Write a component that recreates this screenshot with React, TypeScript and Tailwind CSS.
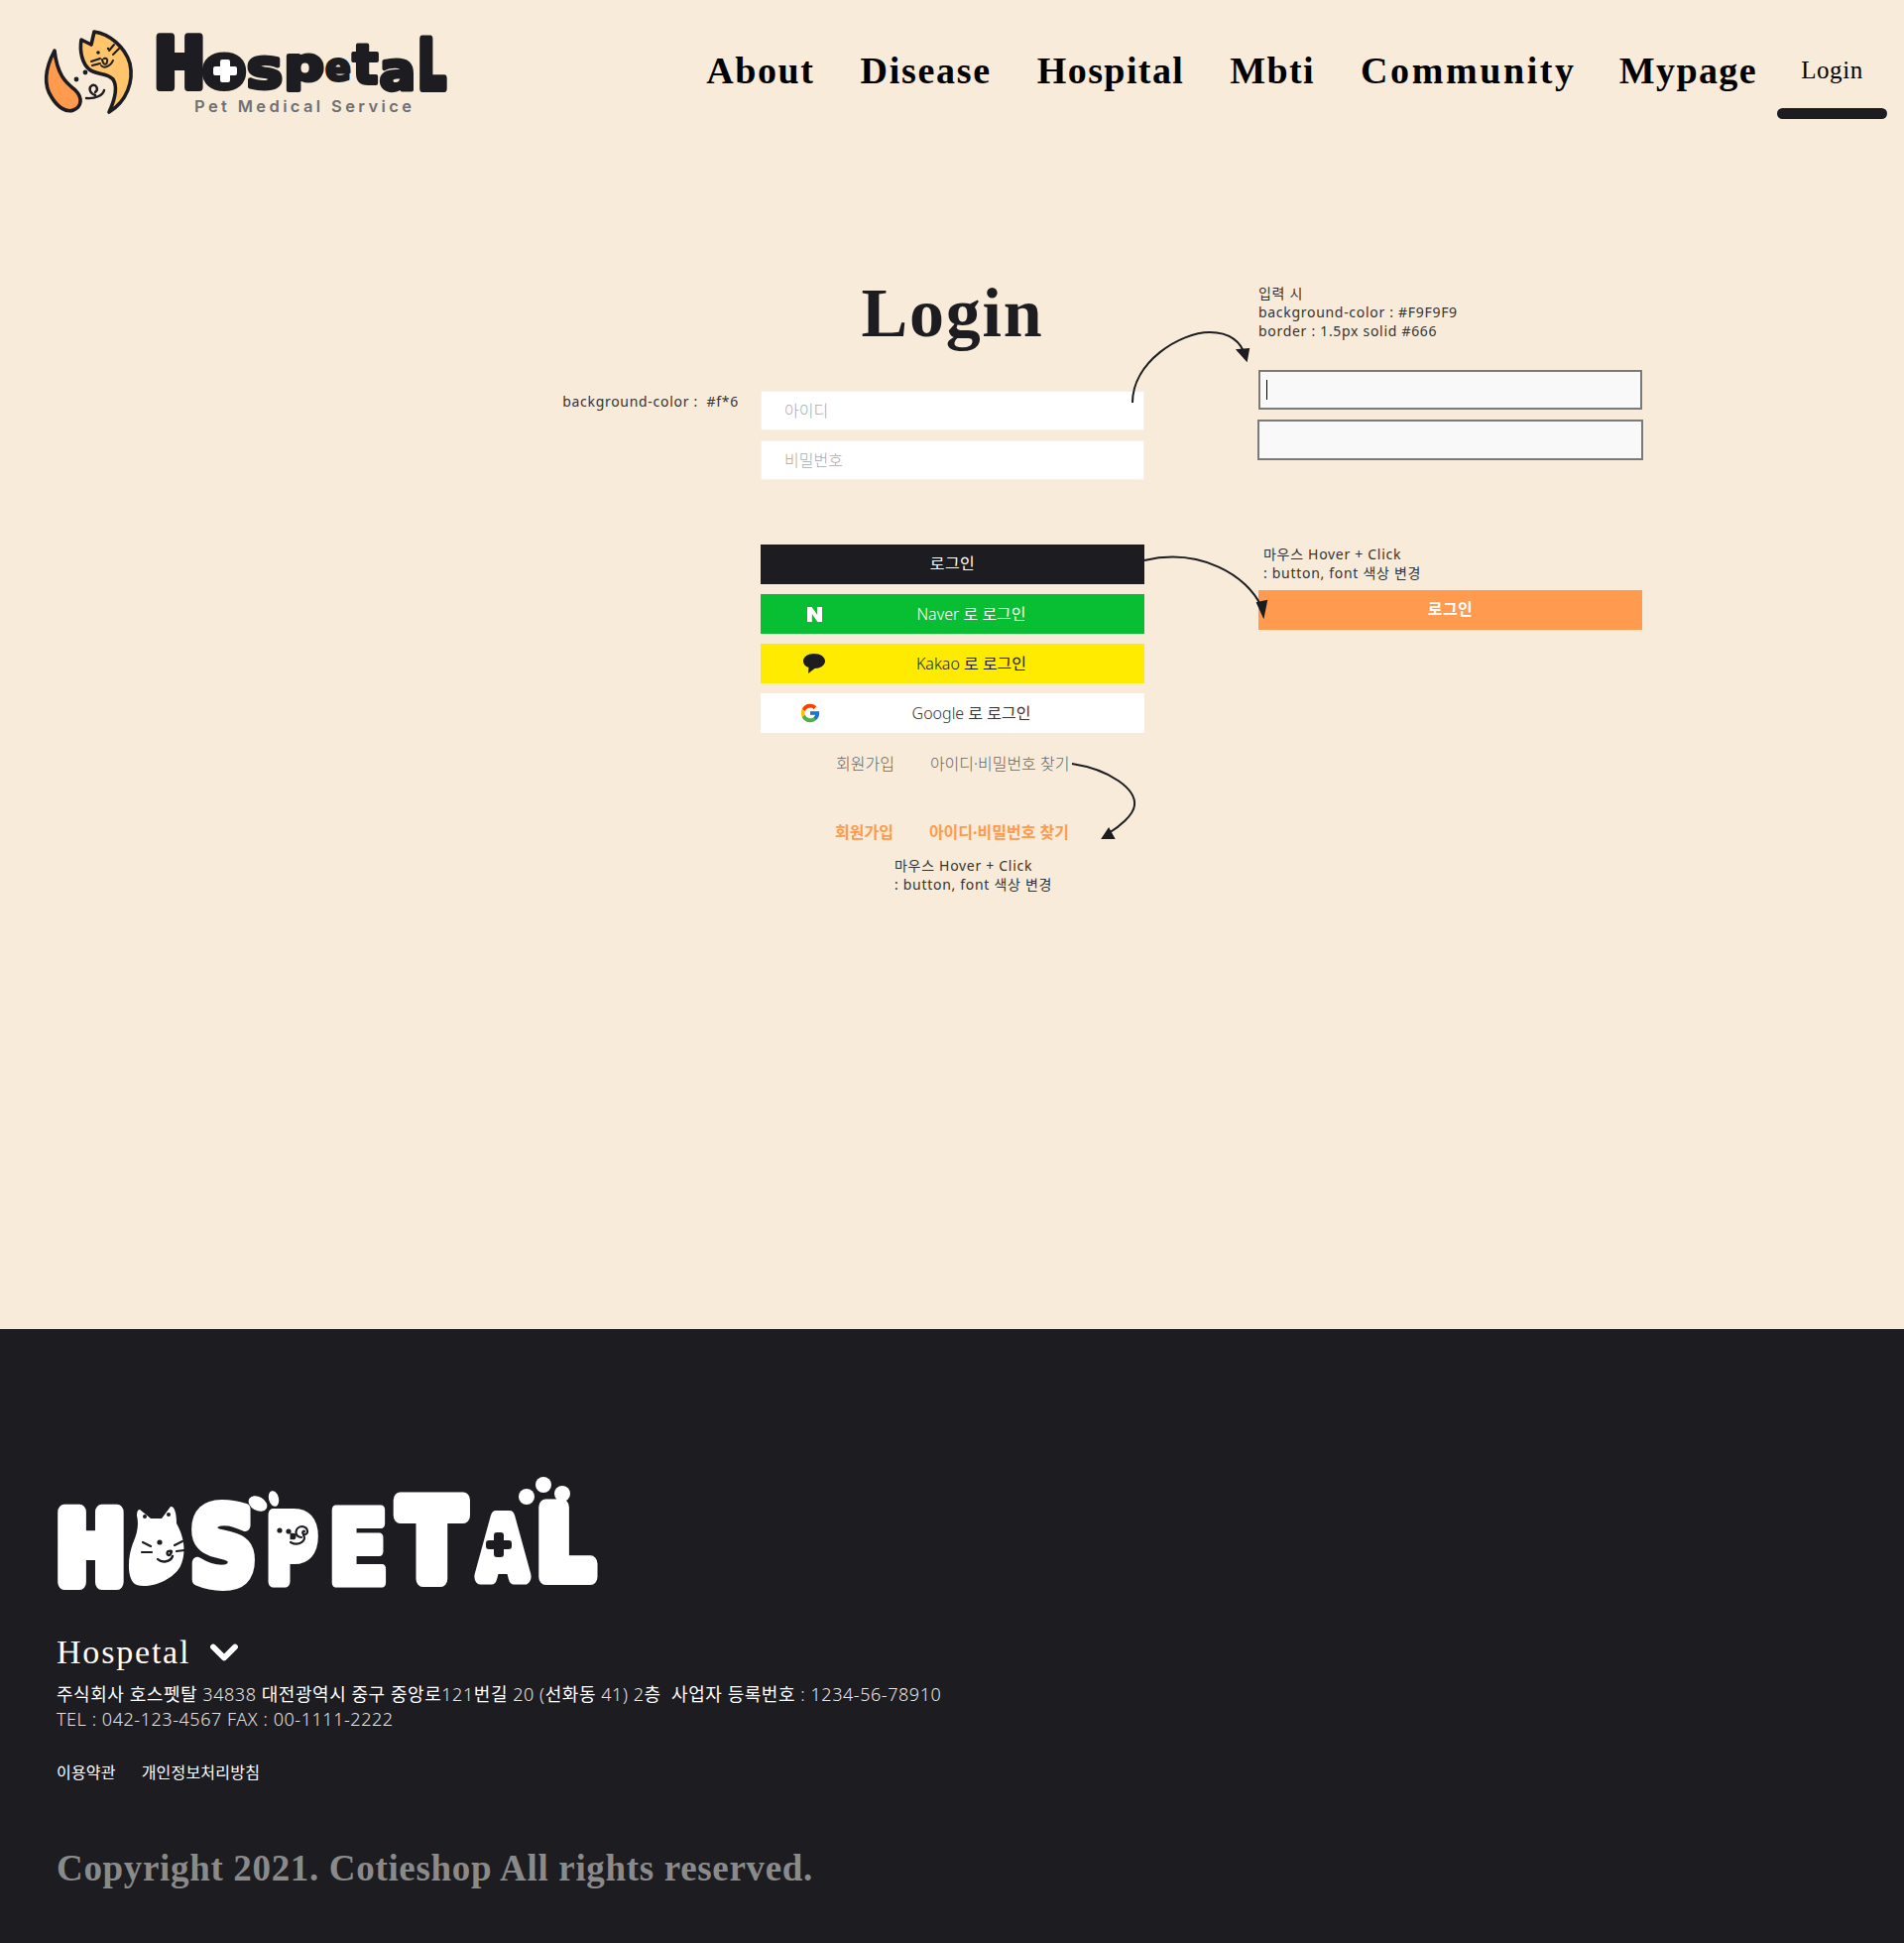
import { ChevronDown } from "lucide-react";
import { SiNaver } from "react-icons/si";
import { FcGoogle } from "react-icons/fc";

const navItems = [
  { label: "About", cls: "tracking-[1.6px]" },
  { label: "Disease", cls: "tracking-[1.7px]" },
  { label: "Hospital", cls: "tracking-[1.4px]" },
  { label: "Mbti", cls: "tracking-[1.4px]" },
  { label: "Community", cls: "mr-[-3px] tracking-[2.6px]" },
  { label: "Mypage", cls: "tracking-[1.4px]" },
];

// 글자별 여백 보정 (DejaVu Sans Bold 기준)
const bearing: Record<string, number> = { H: 1.28, o: 1.14, s: 1.15, p: 1.15, e: 1.12, t: 1.12, a: 1.15, L: 1.2, S: 1.15, P: 1.2, E: 1.2, T: 1.02, A: 1.0 };

// 로고 글자 하나 (실제 텍스트에 둥근 외곽선)
function LogoLetter({ ch, x, w, y, size, color, sw }: { ch: string; x: number; w: number; y: number; size: number; color: string; sw: number }) {
  const ink = w - sw;
  const len = ink * (bearing[ch] ?? 1.1);
  return (
    <text
      x={x + sw / 2 - (len - ink) / 2}
      y={y}
      fontFamily="'DejaVu Sans', sans-serif"
      fontWeight={700}
      fontSize={size}
      fill={color}
      stroke={color}
      strokeWidth={sw}
      strokeLinejoin="round"
      textLength={len}
      lengthAdjust="spacingAndGlyphs"
    >
      {ch}
    </text>
  );
}

function CatMark() {
  return (
    <svg viewBox="0 0 130 110" className="h-[110px] w-[130px] shrink-0">
      <path d="M25 31 C15 50 14 66 22 78 C28 88 37 94 44 91 C52 88 54 79 46 71 C38 64 28 58 25 31 Z" fill="#ff9a4e" stroke="#1c1c21" strokeWidth="3.6" strokeLinejoin="round" />
      <path d="M52 20 L62 25 L65 12 C80 14 96 27 101 44 C105 62 98 82 80 93 C86 80 89 68 84 60 C78 53 68 56 60 50 C53 44 50 32 52 20 Z" fill="#ffc46c" stroke="#1c1c21" strokeWidth="3.6" strokeLinejoin="round" />
      <circle cx="47" cy="60" r="2.4" fill="#1c1c21" />
      <circle cx="56" cy="53" r="2.4" fill="#1c1c21" />
      <path d="M57 79 C66 80 74 76 75 71 M66 76 C60 74 59 68 63 66 C67 65 70 70 66 73" fill="none" stroke="#1c1c21" strokeWidth="2.4" strokeLinecap="round" />
      <path d="M62 42 L71 39 M63 46 L71 44 M80 31 L85 25 M84 35 L90 29" stroke="#1c1c21" strokeWidth="2" strokeLinecap="round" />
      <circle cx="69" cy="33" r="1.8" fill="#1c1c21" />
      <circle cx="79" cy="29" r="1.2" fill="#1c1c21" />
      <path d="M73 40 C74 46 78 46 78 42 C79 40 77 38 75 39 M72 46 C75 50 82 46 84 41" fill="none" stroke="#1c1c21" strokeWidth="2" strokeLinecap="round" />
    </svg>
  );
}

function HeaderWordmark() {
  const c = "#1c1c21";
  return (
    <svg viewBox="150 25 310 95" className="mt-[5px] ml-[-10px] h-[95px] w-[310px] shrink-0">
      <LogoLetter ch="H" x={157} w={48} y={88} size={70} color={c} sw={8} />
      <LogoLetter ch="o" x={204} w={44} y={87} size={56} color={c} sw={8} />
      <path d="M224 60 h6 a2 2 0 0 1 2 2 v5 h5 a2 2 0 0 1 2 2 v5 a2 2 0 0 1 -2 2 h-5 v5 a2 2 0 0 1 -2 2 h-6 a2 2 0 0 1 -2 -2 v-5 h-5 a2 2 0 0 1 -2 -2 v-5 a2 2 0 0 1 2 -2 h5 v-5 a2 2 0 0 1 2 -2 Z" fill="#fff" />
      <LogoLetter ch="s" x={249} w={36} y={88} size={56} color={c} sw={4} />
      <LogoLetter ch="p" x={287} w={39} y={81} size={47} color={c} sw={4} />
      <LogoLetter ch="e" x={328} w={26} y={81} size={38} color={c} sw={3} />
      <LogoLetter ch="t" x={355} w={27} y={84} size={56} color={c} sw={4} />
      <LogoLetter ch="a" x={383} w={36} y={90} size={54} color={c} sw={4} />
      <LogoLetter ch="L" x={420} w={31} y={89} size={68} color={c} sw={8} />
      <text x={196} y={113} fontFamily="Inter, sans-serif" fontWeight={600} fontSize={16.5} fill="#6f7073" textLength={219}>
        Pet Medical Service
      </text>
    </svg>
  );
}

function FooterLogo() {
  const w = "#ffffff";
  const d = "#1c1c21";
  return (
    <svg viewBox="50 1490 560 125" className="h-[125px] w-[560px]">
      <LogoLetter ch="H" x={57} w={69} y={1597} size={97} color={w} sw={16} />
      {/* 고양이 O */}
      <path d="M141 1524 L152 1533 L163 1533 L172 1521 C176 1520 178 1528 178 1538 C186 1552 188 1568 182 1581 C174 1596 150 1604 138 1600 C128 1596 128 1574 134 1558 C139 1547 140 1538 138 1530 C138 1526 139 1524 141 1524 Z" fill={w} />
      <circle cx="146" cy="1531" r="2" fill={d} />
      <circle cx="170" cy="1529" r="2" fill={d} />
      <circle cx="161" cy="1557" r="2.6" fill={d} />
      <path d="M144 1557 L152 1561 M143 1567 L153 1567 M184 1556 L176 1560 M186 1565 L178 1566" stroke={d} strokeWidth="2.2" strokeLinecap="round" />
      <path d="M171 1566 C175 1564 172 1570 170 1570 C168 1570 168 1565 171 1566 M159 1574 C163 1578 172 1577 174 1571" fill="none" stroke={d} strokeWidth="2.4" strokeLinecap="round" />
      <LogoLetter ch="S" x={190} w={70} y={1599} size={106} color={w} sw={12} />
      <LogoLetter ch="P" x={267} w={54} y={1596} size={92} color={w} sw={12} />
      <circle cx="291" cy="1546" r="2.6" fill={d} />
      <circle cx="282" cy="1545" r="2.6" fill={d} />
      <path d="M293 1557 C302 1562 310 1554 306 1550 M304 1552 C296 1552 297 1541 305 1541 C311 1542 312 1550 306 1549 C304 1547 306 1545 307 1546" fill="none" stroke={d} strokeWidth="2.2" strokeLinecap="round" />
      <ellipse cx="260" cy="1518" rx="10" ry="7" fill={w} transform="rotate(30 260 1518)" />
      <ellipse cx="276" cy="1513" rx="5" ry="8" fill={w} transform="rotate(-15 276 1513)" />
      <LogoLetter ch="E" x={331} w={60} y={1598} size={102} color={w} sw={9} />
      <LogoLetter ch="T" x={396} w={79} y={1594} size={108} color={w} sw={16} />
      <LogoLetter ch="A" x={476} w={62} y={1592} size={81} color={w} sw={16} />
      <path d="M501 1547 h4 a3 3 0 0 1 3 3 v5 h5 a3 3 0 0 1 3 3 v3 a3 3 0 0 1 -3 3 h-5 v5 a3 3 0 0 1 -3 3 h-4 a3 3 0 0 1 -3 -3 v-5 h-5 a3 3 0 0 1 -3 -3 v-3 a3 3 0 0 1 3 -3 h5 v-5 a3 3 0 0 1 3 -3 Z" fill={d} />
      <LogoLetter ch="L" x={539} w={62} y={1592} size={97} color={w} sw={16} />
      <circle cx="531" cy="1511" r="8" fill={w} />
      <circle cx="548" cy="1499" r="8" fill={w} />
      <circle cx="567" cy="1508" r="8" fill={w} />
    </svg>
  );
}

function KakaoIcon() {
  return (
    <svg viewBox="0 0 22 20" className="h-5 w-[22px]">
      <path d="M11 0 C17 0 22 3 22 7.5 C22 12 17 15 11.5 15 L5 20 L5.5 14 C2 12.8 0 10.4 0 7.5 C0 3 5 0 11 0 Z" fill="#1c1c21" />
    </svg>
  );
}

function SocialButton({ icon, brand, className }: { icon: React.ReactNode; brand: string; className: string }) {
  return (
    <button className={`flex h-10 w-full items-center pl-[38px] pr-[32px] text-base font-light ${className}`}>
      <span className="flex w-8 shrink-0 items-center justify-center">{icon}</span>
      <span className="flex-1 text-center">
        {brand} <span className="font-normal">로 로그인</span>
      </span>
    </button>
  );
}

export default function App() {
  return (
    <div className="flex min-h-[1959px] flex-col bg-[#f8ebd9] font-['Noto_Sans','Noto_Sans_CJK_KR',sans-serif] text-[#1c1c21]">
      {/* 헤더 */}
      <header className="flex h-[140px] shrink-0 items-start justify-between pr-[17px] pl-[30px] pt-5">
        <div className="flex items-start">
          <CatMark />
          <HeaderWordmark />
        </div>
        <nav className="mt-[-20px] flex items-start pt-[46px] font-['Liberation_Serif',serif]">
          {navItems.map((item) => (
            <a key={item.label} className={`px-[23px] text-[38px] leading-[50px] font-bold text-black ${item.cls}`}>
              {item.label}
            </a>
          ))}
          <a className="ml-[-3px] flex h-[74px] w-[111px] flex-col items-center justify-between">
            <span className="text-[25px] leading-[50px] tracking-[0.6px] text-black">Login</span>
            <span className="h-[11px] w-full rounded-full bg-[#1c1c21]" />
          </a>
        </nav>
      </header>

      {/* 본문 */}
      <main className="relative flex-1">
        <div className="grid grid-cols-[1fr_387px_1fr] pl-px pt-[140px]">
          <div className="flex justify-end pr-[22px] pt-[115px]">
            <p className="text-sm leading-[19px] tracking-[0.7px] text-[#333]">background-color :&nbsp; #f*6</p>
          </div>

          <div className="flex flex-col">
            <h1 className="h-[114px] text-center font-['Liberation_Serif',serif] text-[70px] leading-[72px] font-bold tracking-[1.8px]">Login</h1>
            <div className="flex flex-col gap-2.5">
              <input placeholder="아이디" className="h-10 w-full border-[1.5px] border-[#f4f2ef] bg-white pl-[23px] text-base font-light outline-none placeholder:text-[#aaa]" />
              <input placeholder="비밀번호" className="h-10 w-full border-[1.5px] border-[#f4f2ef] bg-white pl-[23px] text-base font-light outline-none placeholder:text-[#aaa]" />
            </div>
            <div className="mt-[65px] flex flex-col gap-2.5">
              <button className="h-10 w-full bg-[#1c1c21] pb-0.5 text-base tracking-[0.5px] text-white">로그인</button>
              <SocialButton icon={<SiNaver size={15} className="text-white" />} brand="Naver" className="bg-[#08bf34] text-white" />
              <SocialButton icon={<KakaoIcon />} brand="Kakao" className="bg-[#ffeb00] text-[#1c1c21]" />
              <SocialButton icon={<span className="ml-[-8px]"><FcGoogle size={22} /></span>} brand="Google" className="bg-white text-[#333]" />
            </div>
            <div className="mt-5 flex gap-9 pl-[76px] text-base leading-[22px] font-light text-[#666]">
              <a>회원가입</a>
              <a>아이디·비밀번호 찾기</a>
            </div>
            <div className="mt-[47px] flex gap-9 pl-[75px] text-base leading-[22px] font-bold text-[#ff9a4e]">
              <a>회원가입</a>
              <a>아이디·비밀번호 찾기</a>
            </div>
            <p className="mt-[13px] pl-[135px] text-sm leading-[19px] tracking-[0.7px] text-[#333]">
              마우스 Hover + Click
              <br />: button, font 색상 변경
            </p>
          </div>

          <div className="flex flex-col pl-[115px]">
            <p className="mt-[6px] text-sm leading-[19px] tracking-[0.7px] text-[#333]">
              입력 시
              <br />background-color : #F9F9F9
              <br />border : 1.5px solid #666
            </p>
            <div className="mt-[30px] flex h-10 w-[387px] items-center border-[2px] border-[#7a7a7a] bg-[#f9f9f9] pl-1.5">
              <span className="h-5 w-px bg-black" />
            </div>
            <div className="mt-2.5 ml-[-1px] h-[41px] w-[389px] border-[2px] border-[#7a7a7a] bg-[#f9f9f9]" />
            <p className="mt-[85px] ml-[5px] text-sm leading-[19px] tracking-[0.7px] text-[#333]">
              마우스 Hover + Click
              <br />: button, font 색상 변경
            </p>
            <button className="mt-[8px] h-10 w-[387px] bg-[#ff9a4e] pb-0.5 text-base font-bold tracking-[0.5px] text-white">로그인</button>
          </div>
        </div>

        {/* 화살표 */}
        <svg viewBox="0 140 1920 1200" className="pointer-events-none absolute top-0 left-0 h-[1200px] w-[1920px]" fill="none" stroke="#1c1c21" strokeWidth="2">
          <path d="M1142 406 C1142 365 1190 335 1220 335 C1240 335 1252 345 1255 358" />
          <path d="M1248 353 L1259 352 L1257 363 Z" fill="#1c1c21" />
          <path d="M1154 565 C1210 552 1258 580 1272 612" />
          <path d="M1268 608 L1277 606 L1274 621 Z" fill="#1c1c21" />
          <path d="M1081 770 C1120 776 1146 796 1144 812 C1143 822 1128 834 1118 840" />
          <path d="M1112 845 L1123 845 L1118 836 Z" fill="#1c1c21" />
        </svg>
      </main>

      {/* 푸터 */}
      <footer className="h-[619px] shrink-0 bg-[#1c1c21] pl-[57px] pt-[148px] text-white">
        <div className="ml-[-7px]">
          <FooterLogo />
        </div>
        <div className="mt-[33px] flex items-center gap-3">
          <h2 className="font-['Liberation_Serif',serif] text-[34px] leading-[40px] tracking-[1.8px]">Hospetal</h2>
          <ChevronDown size={44} strokeWidth={3.2} className="my-[-2px]" />
        </div>
        <div className="mt-[10px] text-lg leading-[25px] font-light tracking-[0.55px] text-[#e4e4e4]">
          <p>
            <span className="font-normal text-white">주식회사 호스펫탈</span> 34838 <span className="font-normal text-white">대전광역시 중구 중앙로</span>121<span className="font-normal text-white">번길</span> 20 (<span className="font-normal text-white">선화동</span> 41) 2<span className="font-normal text-white">층 &nbsp;사업자 등록번호</span> : 1234-56-78910
          </p>
          <p>TEL : 042-123-4567 FAX : 00-1111-2222</p>
        </div>
        <div className="mt-[31px] flex gap-[26px] text-base leading-5 tracking-[0.2px]">
          <a>이용약관</a>
          <a>개인정보처리방침</a>
        </div>
        <p className="mt-[65px] font-['Liberation_Serif',serif] text-[37px] leading-[44px] font-bold tracking-[0.67px] text-[#8a8a8a]">Copyright 2021. Cotieshop All rights reserved.</p>
      </footer>
    </div>
  );
}
